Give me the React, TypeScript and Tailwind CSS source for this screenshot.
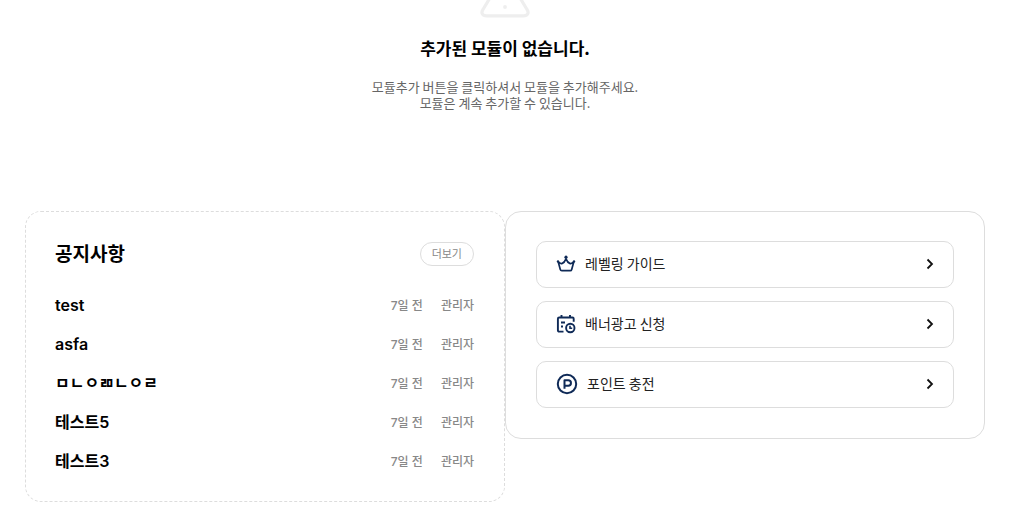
import type { ReactNode } from "react";

const posts = ["test", "asfa", "ㅁㄴㅇㄻㄴㅇㄹ", "테스트5", "테스트3"];

function WarningIcon() {
  return (
    <svg
      className="h-[18px] w-[50px]"
      viewBox="0 0 50 18"
      fill="none"
      stroke="#eeeeee"
      strokeWidth="3.200"
      strokeLinejoin="round"
      aria-hidden="true"
    >
      <path d="M10.500-3 3 9.500C.6 13 2.600 15.900 6.500 15.900h37c3.900 0 5.900-2.900 3.500-6.400L39.500-3" />
      <circle cx="25" cy="7" r="1.900" fill="#eeeeee" stroke="none" />
    </svg>
  );
}

function CrownIcon() {
  return (
    <svg className="h-5 w-5" viewBox="0 0 20 20" fill="none" stroke="#0f2a57" strokeWidth="1.700" strokeLinejoin="round" strokeLinecap="round" aria-hidden="true">
      <path d="M2.200 7.800 4.300 15.500c.2.800.6 1.200 1.500 1.200h8.400c.9 0 1.300-.4 1.500-1.200l2.100-7.700c-2.600 3-5.600 2.200-7.800-3-2.200 5.200-5.200 6-7.800 3z" />
      <circle cx="10" cy="3.200" r="1.600" fill="#0f2a57" stroke="none" />
      <circle cx="2" cy="7.400" r="1.200" fill="#0f2a57" stroke="none" />
      <circle cx="18" cy="7.400" r="1.200" fill="#0f2a57" stroke="none" />
    </svg>
  );
}

function ScheduleIcon() {
  return (
    <svg className="h-5 w-5" viewBox="0 0 20 20" fill="none" stroke="#0f2a57" strokeWidth="1.900" aria-hidden="true">
      <path d="M7.500 17.600H3.200c-.8 0-1.300-.5-1.300-1.300V4.800c0-.8.500-1.300 1.300-1.300h13.200c.8 0 1.300.5 1.300 1.300v3M5.500 1v3.200M14 1v3.200" />
      <path d="M5 8.500h4M5 12.500h2" strokeWidth="1.800" />
      <circle cx="14.300" cy="14" r="4.200" />
      <path d="M14 11.700v2.600h2.200" strokeWidth="1.600" />
    </svg>
  );
}

function PointIcon() {
  return (
    <svg className="h-[22px] w-[22px]" viewBox="0 0 22 22" fill="none" stroke="#0f2a57" strokeWidth="2" aria-hidden="true">
      <circle cx="11" cy="11" r="9.200" />
      <path d="M8.500 15.700V7.200h3.700a2.700 2.700 0 0 1 0 5.500H8.500" strokeLinejoin="round" />
    </svg>
  );
}

function ChevronIcon() {
  return (
    <svg className="h-3 w-2" viewBox="0 0 8 12" fill="none" stroke="#111" strokeWidth="1.800" aria-hidden="true">
      <path d="m1.500 1.500 4.500 4.500-4.500 4.500" />
    </svg>
  );
}

const links: { label: string; icon: ReactNode }[] = [
  { label: "레벨링 가이드", icon: <CrownIcon /> },
  { label: "배너광고 신청", icon: <ScheduleIcon /> },
  { label: "포인트 충전", icon: <PointIcon /> },
];

export default function App() {
  return (
    <main className="bg-white pr-[49px] pb-7 pl-[25px] font-['Noto_Sans_CJK_KR',sans-serif] text-black">
      <section className="flex flex-col items-center text-center">
        <WarningIcon />
        <h2 className="mt-[18px] text-[17px] leading-6 font-bold">추가된 모듈이 없습니다.</h2>
        <p className="mt-[19px] text-[13px] leading-4 text-[#666]">
          모듈추가 버튼을 클릭하셔서 모듈을 추가해주세요.
          <br />
          모듈은 계속 추가할 수 있습니다.
        </p>
      </section>

      <div className="mt-[100px] grid grid-cols-2 items-start">
        <section className="rounded-2xl border border-dashed border-[#ddd] pt-[30px] pr-[30px] pb-5 pl-[29px]">
          <div className="flex items-center justify-between">
            <h2 className="pb-0.5 text-[19px] leading-[22px] font-bold">공지사항</h2>
            <button type="button" className="h-6 rounded-full border border-[#ddd] px-[11px] pb-0.5 text-[11px] leading-4 text-[#888]">
              더보기
            </button>
          </div>
          <ul className="mt-5 font-['Inter','Noto_Sans_CJK_KR',sans-serif]">
            {posts.map((post) => (
              <li key={post} className="flex h-[39px] items-center justify-between">
                <a href="#" className="pb-0.5 text-base leading-6 font-semibold">{post}</a>
                <span className="flex gap-[18px] text-xs leading-4 font-medium text-[#888]">
                  <span>7일 전</span>
                  <span>관리자</span>
                </span>
              </li>
            ))}
          </ul>
        </section>

        <nav className="flex flex-col gap-[13px] rounded-2xl border border-[#ddd] px-[30px] pt-[29px] pb-[30px]">
          {links.map(({ label, icon }) => (
            <a key={label} href="#" className="flex h-[47px] items-center rounded-[10px] border border-[#ddd] pr-[19px] pb-0.5 pl-[19px] text-[#222]">
              {icon}
              <span className="ml-[9px] grow pb-0.5 text-sm leading-5">{label}</span>
              <ChevronIcon />
            </a>
          ))}
        </nav>
      </div>
    </main>
  );
}
